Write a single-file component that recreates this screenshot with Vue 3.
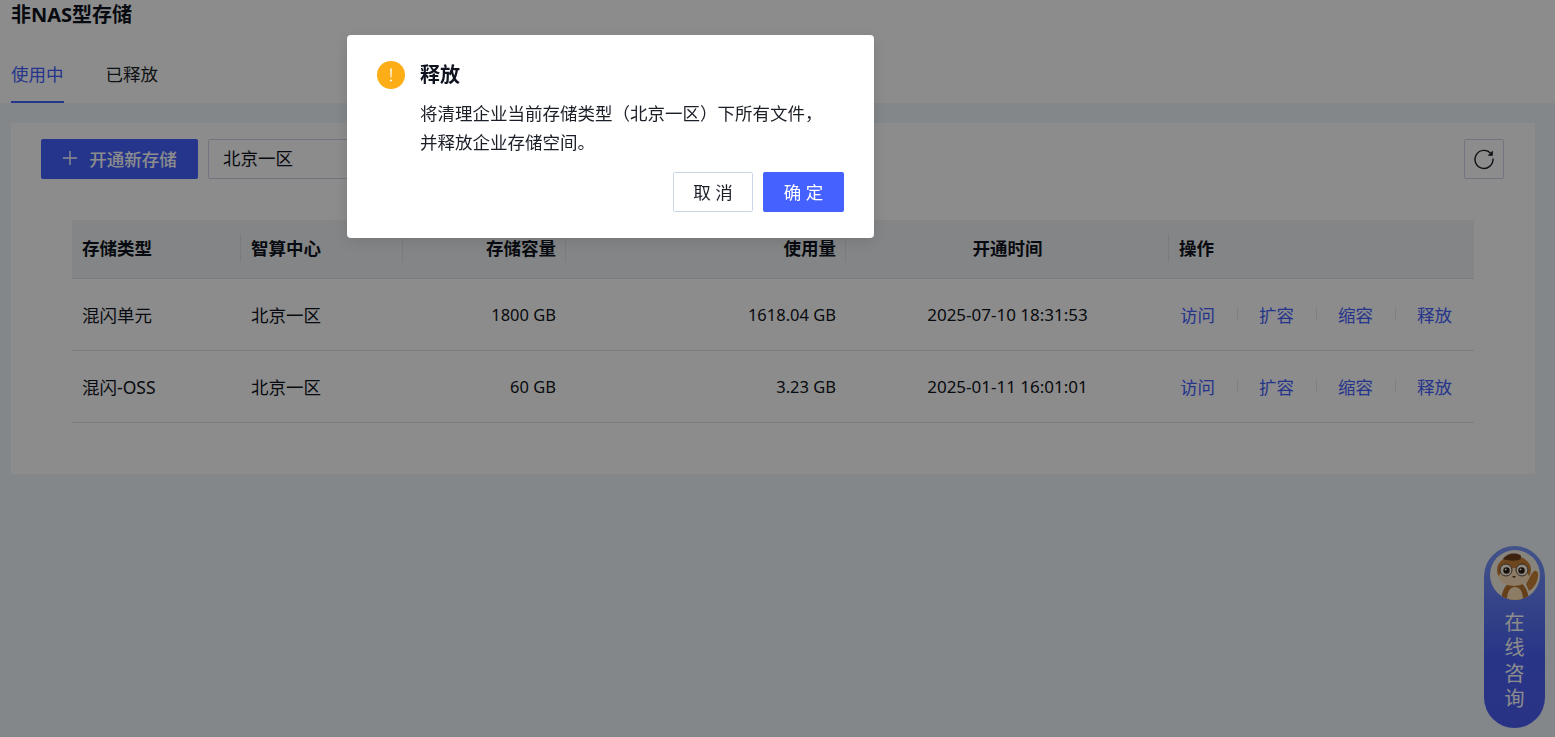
<template>
  <div class="page">
    <header class="page-head">
      <h1 class="page-title">非NAS型存储</h1>
      <nav class="tabs">
        <span v-for="t in tabs" :key="t" class="tab" :class="{ active: t === activeTab }">{{ t }}</span>
      </nav>
    </header>

    <main class="content">
      <section class="card">
        <div class="toolbar">
          <button class="btn-primary">
            <svg class="plus" viewBox="0 0 16 16"><path d="M8 1v14M1 8h14" /></svg>
            开通新存储
          </button>
          <div class="select">北京一区</div>
          <button class="btn-refresh">
            <svg viewBox="0 0 24 24" width="24" height="24" fill="none">
              <path d="M18.9 6.6A9 9 0 1 0 21 12" stroke="#1b1f27" stroke-width="1.4" stroke-linecap="round" />
              <path d="M20.8 3.6v5.2h-5.2z" fill="#1b1f27" />
            </svg>
          </button>
        </div>

        <div class="table">
          <div class="tr thead">
            <div class="td">存储类型</div>
            <div class="td">智算中心</div>
            <div class="td right">存储容量</div>
            <div class="td right">使用量</div>
            <div class="td center">开通时间</div>
            <div class="td">操作</div>
          </div>
          <div v-for="row in rows" :key="row.type" class="tr tbody">
            <div class="td">{{ row.type }}</div>
            <div class="td">{{ row.region }}</div>
            <div class="td right size">{{ row.capacity }}</div>
            <div class="td right size">{{ row.used }}</div>
            <div class="td center num">{{ row.time }}</div>
            <div class="td actions">
              <a v-for="a in actions" :key="a" class="action">{{ a }}</a>
            </div>
          </div>
        </div>
      </section>
    </main>

    <div class="consult">
      <div class="avatar">
        <svg viewBox="0 0 50 50" width="50" height="50">
          <rect width="50" height="50" fill="#f6efe4" />
          <path d="M36 34c3-5 5-10 8-13 3-1 5 2 4 6-1 6-4 11-9 14z" fill="#c98238" />
          <path d="M11 50c1-12 7-19 14-19s13 7 14 19z" fill="#b9742f" />
          <path d="M17 50c0-8 3-13 8-13s8 5 8 13z" fill="#ffe2b8" />
          <ellipse cx="24" cy="20" rx="17" ry="14" fill="#c98238" />
          <path d="M13 9c3-5 11-7 17-4 2 1 1 4-1 5-5 1-11 1-16-1z" fill="#6d3f1d" />
          <ellipse cx="24" cy="27" rx="15" ry="9" fill="#ffe2b8" />
          <circle cx="16" cy="20" r="6" fill="#fff6e8" stroke="#5c4a3c" stroke-width="1" />
          <circle cx="32" cy="20" r="6" fill="#fff6e8" stroke="#5c4a3c" stroke-width="1" />
          <circle cx="16.5" cy="20.5" r="3.2" fill="#2a1a12" />
          <circle cx="31.5" cy="20.5" r="3.2" fill="#2a1a12" />
          <circle cx="15.6" cy="19.4" r="0.9" fill="#fff" />
          <circle cx="30.6" cy="19.4" r="0.9" fill="#fff" />
          <path d="M22 26h4l-2 2.2z" fill="#6d3f1d" />
        </svg>
      </div>
      <div class="consult-text">在线咨询</div>
    </div>

    <div class="mask"></div>

    <div class="modal">
      <div class="modal-head">
        <svg class="warn-icon" viewBox="0 0 28 28">
          <circle cx="14" cy="14" r="14" fill="#fdad15" />
          <path d="M13.2 7.5h1.6l-.3 9h-1z" fill="#fff" />
          <circle cx="14" cy="19.6" r="1" fill="#fff" />
        </svg>
        <span class="modal-title">释放</span>
      </div>
      <p class="modal-body">将清理企业当前存储类型（北京一区）下所有文件，<br />并释放企业存储空间。</p>
      <div class="modal-foot">
        <button class="btn-cancel">取 消</button>
        <button class="btn-ok">确 定</button>
      </div>
    </div>
  </div>
</template>

<script setup>
const tabs = ['使用中', '已释放']
const activeTab = '使用中'
const actions = ['访问', '扩容', '缩容', '释放']

const rows = [
  { type: '混闪单元', region: '北京一区', capacity: '1800 GB', used: '1618.04 GB', time: '2025-07-10 18:31:53' },
  { type: '混闪-OSS', region: '北京一区', capacity: '60 GB', used: '3.23 GB', time: '2025-01-11 16:01:01' },
]
</script>

<style>
html,
body {
  margin: 0;
  overflow: hidden;
}
</style>

<style scoped>
.page {
  min-height: 100vh;
  background: #eef6fa;
  font-family: "Noto Sans", "Noto Sans CJK SC", sans-serif;
  font-size: 17.5px;
  color: #0f1320;
}

.page-head {
  background: #fff;
  height: 103px;
  padding: 0 11px;
  box-sizing: border-box;
}

.page-title {
  margin: 0;
  height: 30px;
  line-height: 30px;
  font-size: 20px;
  font-weight: 700;
}

.tabs {
  display: flex;
  gap: 42px;
  margin-top: 15px;
}

.tab {
  height: 58px;
  line-height: 59px;
  box-sizing: border-box;
  color: #1b1f27;
}

.tab.active {
  color: #4561ff;
  border-bottom: 2px solid #4561ff;
}

.content {
  padding: 20px 20px 0 11px;
}

.card {
  background: #fff;
  height: 351px;
  padding: 16px 31px 0 30px;
  box-sizing: border-box;
}

.toolbar {
  display: flex;
  gap: 10px;
  height: 40px;
}

.btn-primary {
  display: flex;
  align-items: center;
  justify-content: center;
  gap: 11px;
  width: 157px;
  height: 40px;
  padding: 0 0 2px;
  border: 0;
  border-radius: 2px;
  background: #4561ff;
  color: #fff;
  font: inherit;
  font-weight: 500;
}

.plus {
  width: 16px;
  height: 16px;
  fill: none;
  stroke: #fff;
  stroke-width: 1.4;
}

.select {
  width: 300px;
  height: 40px;
  line-height: 36px;
  padding-left: 14px;
  box-sizing: border-box;
  border: 1px solid #cdd5e6;
  border-radius: 2px;
}

.btn-refresh {
  display: flex;
  align-items: center;
  justify-content: center;
  width: 40px;
  height: 40px;
  padding: 0;
  margin-left: auto;
  background: #fff;
  border: 1px solid #cdd5e6;
  border-radius: 2px;
}

.table {
  margin: 41px 0 0 31px;
  width: 1402px;
}

.tr {
  display: grid;
  grid-template-columns: 169px 162px 163px 280px 323px 1fr;
  align-items: center;
}

.thead {
  height: 59px;
  padding-bottom: 2px;
  background: #f0f3f5;
  border-bottom: 1px solid #dde2e8;
  box-sizing: border-box;
  font-weight: 700;
}

.tbody {
  height: 72px;
  padding-bottom: 1px;
  border-bottom: 1px solid #dde2e8;
  box-sizing: border-box;
}

.td {
  padding: 0 10px;
  position: relative;
}

.num {
  font-size: 17px;
}

.size {
  font-size: 16.5px;
}

.thead .td + .td::before {
  content: "";
  position: absolute;
  left: -1px;
  top: 0;
  bottom: 0;
  width: 1px;
  background: #dde2e8;
}

.thead .td {
  height: 28px;
  line-height: 28px;
}

.right {
  text-align: right;
}

.center {
  text-align: center;
}

.actions {
  display: flex;
  padding: 0 0 0 11px;
}

.action {
  color: #4561ff;
  padding-right: 22px;
  margin-right: 22px;
  position: relative;
}

.action:last-child {
  padding-right: 0;
  margin-right: 0;
}

.action:not(:last-child)::after {
  content: "";
  position: absolute;
  right: -1px;
  top: 6px;
  bottom: 6px;
  width: 1px;
  background: #e4e7ec;
}

.consult {
  position: fixed;
  left: 1484px;
  top: 546px;
  width: 61px;
  height: 182px;
  border-radius: 31px;
  background: linear-gradient(180deg, #7a98f8 0%, #4a62f6 60%, #4c5df5 100%);
}

.avatar {
  width: 50px;
  height: 50px;
  margin: 4px auto 0;
  border-radius: 50%;
  overflow: hidden;
}

.consult-text {
  width: 20px;
  margin: 10px auto 0;
  font-size: 20px;
  line-height: 25.3px;
  color: #fff;
  text-align: center;
}

.mask {
  position: fixed;
  inset: 0;
  background: rgba(0, 0, 0, 0.45);
}

.modal {
  position: fixed;
  left: 347px;
  top: 35px;
  width: 527px;
  height: 203px;
  padding: 26px 30px 0;
  box-sizing: border-box;
  background: #fff;
  border-radius: 4px;
  box-shadow: 0 4px 16px rgba(0, 0, 0, 0.12);
}

.modal-head {
  display: flex;
  align-items: center;
  gap: 15px;
  height: 28px;
}

.warn-icon {
  width: 28px;
  height: 28px;
}

.modal-title {
  padding-bottom: 3px;
  font-size: 20px;
  font-weight: 700;
  color: #0f1320;
}

.modal-body {
  margin: 10px 0 0 43px;
  line-height: 29px;
  color: #1b1f27;
}

.modal-foot {
  display: flex;
  justify-content: flex-end;
  gap: 10px;
  margin-top: 15px;
}

.btn-cancel,
.btn-ok {
  height: 40px;
  border-radius: 2px;
  font: inherit;
  padding: 0 0 2px;
}

.btn-cancel {
  width: 80px;
  background: #fff;
  border: 1px solid #c9d8e8;
  color: #1b1f27;
}

.btn-ok {
  width: 81px;
  background: #4561ff;
  border: 0;
  color: #fff;
}
</style>
